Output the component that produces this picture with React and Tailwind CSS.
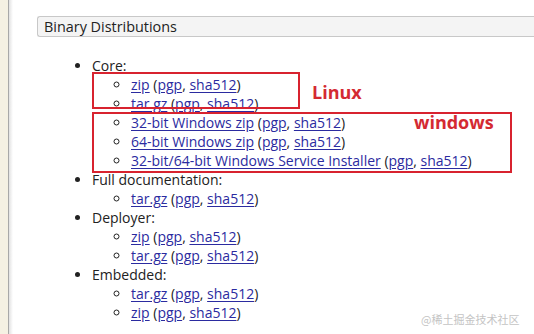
import React from 'react';

const link = 'text-[#2b2ba0] underline underline-offset-[2px]';

function Dl({ name }) {
  return (
    <li>
      <a className={link}>{name}</a> (<a className={link}>pgp</a>, <a className={link}>sha512</a>)
    </li>
  );
}

const groups = [
  { title: 'Core:', items: ['zip', 'tar.gz', '32-bit Windows zip', '64-bit Windows zip', '32-bit/64-bit Windows Service Installer'] },
  { title: 'Full documentation:', items: ['tar.gz'] },
  { title: 'Deployer:', items: ['zip', 'tar.gz'] },
  { title: 'Embedded:', items: ['tar.gz', 'zip'] },
];

export default function App() {
  return (
    <div className="relative w-[534px] h-[334px] overflow-hidden bg-white flex font-['Open_Sans',sans-serif] text-[14px] leading-[19px] text-[#222]">
      {/* page margin strip */}
      <div className="w-[8px] bg-[#f5f1e3] shrink-0" />
      <div className="w-[1px] bg-[#a8a8a8] shrink-0" />
      <div className="w-[4px] shrink-0 bg-gradient-to-r from-[#e2e2e2] to-white" />

      <div className="flex-1 pl-[24px] pt-[16px]">
        <div className="h-[21px] border border-r-0 border-[#c8c8c8] bg-[#f4f4f4] rounded-l-[3px] pl-[6px] flex items-center text-[14.4px]">
          Binary Distributions
        </div>

        <ul className="list-disc pl-[55px] mt-[19px]">
          {groups.map((g) => (
            <li key={g.title}>
              {g.title}
              <ul className="list-[circle] pl-[39px]">
                {g.items.map((it, i) => (
                  <Dl key={i} name={it} />
                ))}
              </ul>
            </li>
          ))}
        </ul>
      </div>

      {/* annotations drawn over the list */}
      <div className="absolute left-[92px] top-[72px] w-[208px] h-[37px] border-2 border-[#d8232f]" />
      <div className="absolute left-[92px] top-[112px] w-[420px] h-[61px] border-2 border-[#d8232f]" />
      <div className="absolute left-[312px] top-[80px] font-bold text-[18px] leading-[24px] text-[#d42a32]">Linux</div>
      <div className="absolute left-[414px] top-[110px] font-bold text-[18px] leading-[24px] text-[#d42a32]">windows</div>

      <div className="absolute left-[421px] top-[310px] text-[11px] text-[#c4c4c4] font-['Noto_Sans_CJK_SC',sans-serif]">
        @稀土掘金技术社区
      </div>
    </div>
  );
}
